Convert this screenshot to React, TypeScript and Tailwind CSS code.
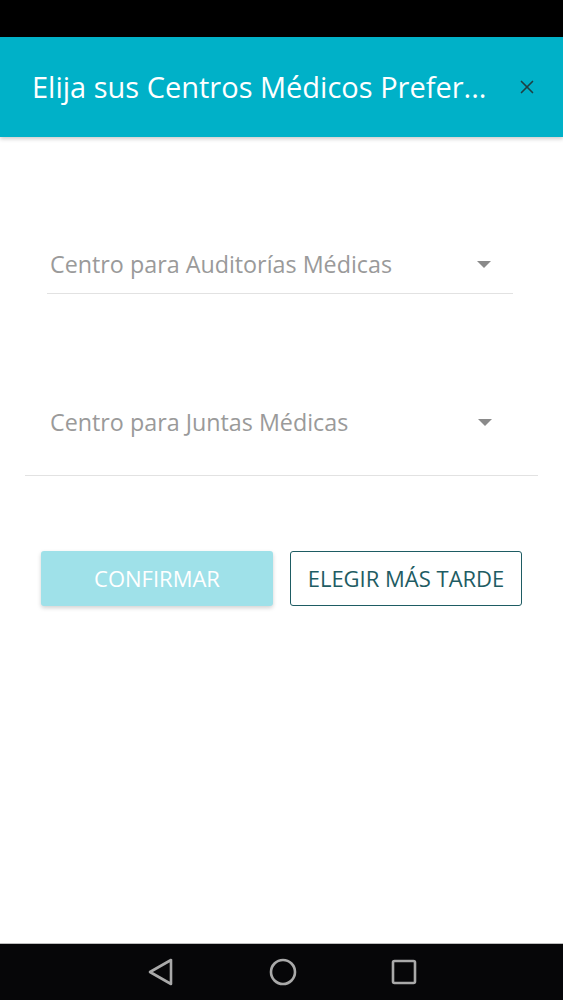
import { X } from "lucide-react";

const font = { fontFamily: "'Open Sans', 'Liberation Sans', sans-serif" };

function SelectField({ label, wide }: { label: string; wide?: boolean }) {
  return (
    <div className={wide ? "px-[25px]" : "pl-[47px] pr-[50px]"}>
      <div
        className={
          "border-b border-[#e2e2e2] " +
          (wide ? "pl-[25px] pr-[46px] pt-[13px] pb-[37px]" : "pl-[3px] pr-[22px] pt-[2px] pb-[13px]")
        }
      >
        <div className="flex h-[32px] items-center">
          <span className="flex-1 text-[23.3px] text-[#9a9a9a]">{label}</span>
          <svg width="14" height="7" viewBox="0 0 14 7">
            <path d="M0 0h14L7 7z" fill="#8a8a8a" />
          </svg>
        </div>
      </div>
    </div>
  );
}

export default function App() {
  return (
    <div className="flex h-[1000px] w-[563px] flex-col bg-white" style={font}>
      <div className="h-[37px] bg-black" />
      <div className="relative z-10 flex h-[100px] items-center bg-[#00b1c8] pl-[32px] pr-[25px] shadow-[0_2px_4px_rgba(0,0,0,0.2)]">
        <h1 className="flex-1 truncate text-[29px] font-normal text-white">
          Elija sus Centros Médicos Prefer...
        </h1>
        <X className="h-[22px] w-[22px] text-[#1f3f43]" strokeWidth={1.8} />
      </div>

      <div className="flex-1">
        <div className="pt-[109px]">
          <SelectField label="Centro para Auditorías Médicas" />
        </div>
        <div className="pt-[99px]">
          <SelectField label="Centro para Juntas Médicas" wide />
        </div>

        <div className="mt-[75px] flex gap-[17px] px-[41px]">
          <button className="h-[55px] w-[232px] rounded-[3px] bg-[#9fe1e9] text-[22px] text-white shadow-[0_2px_4px_rgba(0,0,0,0.18)]">
            CONFIRMAR
          </button>
          <button className="h-[55px] w-[232px] rounded-[3px] border-[1.5px] border-[#1e5c63] bg-white text-[22px] text-[#1e5c63]">
            ELEGIR MÁS TARDE
          </button>
        </div>
      </div>

      <div className="flex h-[57px] items-center justify-center gap-[94px] border-t border-[#bdbdbd] bg-[#060608]">
        <svg width="28" height="30" viewBox="0 0 28 30">
          <path d="M24 3v24L3 15z" fill="none" stroke="#a9a9a9" strokeWidth="2.6" strokeLinejoin="round" />
        </svg>
        <svg width="28" height="28" viewBox="0 0 28 28">
          <circle cx="14" cy="14" r="12" fill="none" stroke="#a9a9a9" strokeWidth="2.6" />
        </svg>
        <svg width="26" height="26" viewBox="0 0 26 26">
          <rect x="2" y="2" width="22" height="22" rx="1.5" fill="none" stroke="#a9a9a9" strokeWidth="2.6" />
        </svg>
      </div>
    </div>
  );
}
